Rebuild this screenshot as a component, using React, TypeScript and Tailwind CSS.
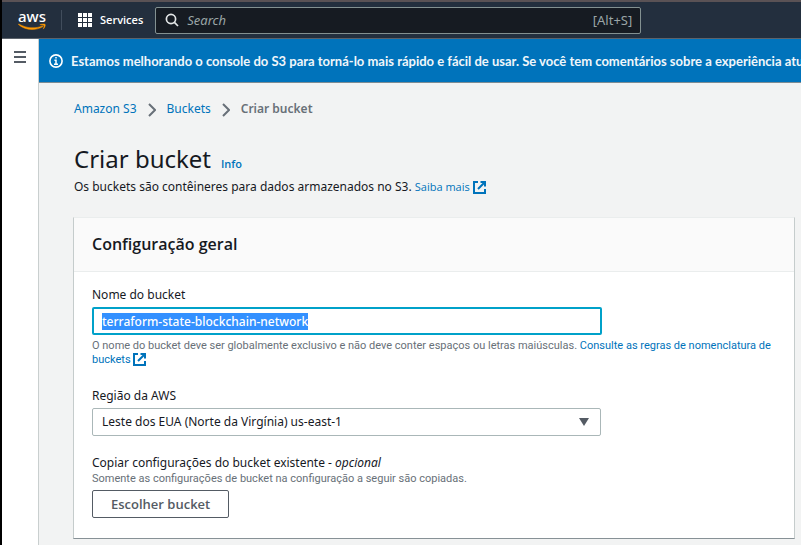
import { useEffect, useRef } from 'react';
import type { ReactNode } from 'react';

function AwsLogo() {
  return (
    <a href="#home" aria-label="AWS" className="flex w-7 flex-col items-center text-white">
      <span className="text-[15px] leading-3 font-medium">aws</span>
      <svg viewBox="0 0 28 9" className="h-[9px] w-7" fill="none" aria-hidden="true">
        <path d="M0.4 2.4C7 8.6 18 8.8 25 4.6L24.6 3.9C17.6 6.8 8.5 6.6 0.7 1.9Z" fill="#f90" stroke="#f90" strokeWidth="0.5" />
        <path d="M21.8 2.7C24 1.9 26.6 1.8 27.2 2.4C27.7 3.2 26.8 5.6 25.2 7.1C25.9 5.4 26.3 4 25.9 3.5C25.4 3.1 23.8 3.1 21.8 2.7Z" fill="#f90" stroke="#f90" strokeWidth="0.4" />
      </svg>
    </a>
  );
}

function ExternalIcon() {
  return (
    <svg viewBox="0 0 13 13" className="inline-block size-[13px] align-[-3px]" fill="none" stroke="#0073bb" strokeWidth="2" aria-hidden="true">
      <path d="M5 1H1V12H12V8" />
      <path d="M7.5 1H12V5.5M12 1L5 8" />
    </svg>
  );
}

function Chevron() {
  return (
    <svg viewBox="0 0 8 14" className="mt-[2px] h-[14px] w-2" fill="none" stroke="#687078" strokeWidth="2" aria-hidden="true">
      <path d="M1 1L7 7L1 13" />
    </svg>
  );
}

function Hint({ id, children }: { id: string; children: ReactNode }) {
  return (
    <p id={id} className="font-['Roboto',sans-serif] text-[11px] leading-[14px] text-[#687078]">
      {children}
    </p>
  );
}

function Header() {
  return (
    <header className="flex h-[39px] items-center border-t-2 border-b border-t-[#5a5255] border-b-[#5c636b] bg-[#232f3e] pl-4 text-white">
      <AwsLogo />
      <span className="mr-4 ml-[15px] h-5 w-px bg-[#414d5c]" />
      <button type="button" className="flex items-center gap-2 font-['Open_Sans',sans-serif] text-[11px] font-semibold">
        <svg viewBox="0 0 14 14" className="size-[14px]" fill="#fff" aria-hidden="true">
          <path d="M0 0h4v4H0zM5 0h4v4H5zM10 0h4v4h-4zM0 5h4v4H0zM5 5h4v4H5zM10 5h4v4h-4zM0 10h4v4H0zM5 10h4v4H5zM10 10h4v4h-4z" />
        </svg>
        Services
      </button>
      <label className="ml-3 flex h-[27px] w-[486px] items-center rounded-[2px] border border-[#839191] bg-[#161b22] px-2 text-[13px]">
        <svg viewBox="0 0 14 14" className="mr-2 ml-px size-[14px] shrink-0" fill="none" stroke="#e4e7e8" strokeWidth="1.7" aria-hidden="true">
          <circle cx="6" cy="6" r="4.6" />
          <path d="M9.4 9.4L13 13" />
        </svg>
        <input
          type="search"
          aria-label="Search"
          placeholder="Search"
          className="min-w-0 flex-1 bg-transparent outline-none placeholder:text-[#9aa5a6] placeholder:italic"
        />
        <span className="text-[#9aa5a6]">[Alt+S]</span>
      </label>
    </header>
  );
}

export default function App() {
  const nameInput = useRef<HTMLInputElement>(null);

  useEffect(() => {
    nameInput.current?.focus();
    nameInput.current?.select();
  }, []);

  return (
    <div className="flex min-h-screen flex-col overflow-hidden border-l-2 border-black bg-[#f2f3f3] font-['Noto_Sans','Open_Sans',sans-serif] text-[12px] leading-[18px] text-[#16191f]">
      <Header />
      <div className="flex flex-1">
        <nav className="flex w-[37px] shrink-0 flex-col items-center border-r border-[#c9cfcf] bg-white pt-3">
          <button type="button" aria-label="Menu" className="flex w-3 flex-col gap-[3px]">
            <span className="h-[2px] bg-[#545b64]" />
            <span className="h-[2px] bg-[#545b64]" />
            <span className="h-[2px] bg-[#545b64]" />
          </button>
        </nav>
        <div className="min-w-0 flex-1">
          <div className="flex h-11 items-center gap-2 overflow-hidden border-b border-[#7d8c93] bg-[#0073bb] pl-[10px] whitespace-nowrap text-[#f0f6fa]">
            <svg viewBox="0 0 14 14" className="size-[14px] shrink-0" fill="none" stroke="#fff" aria-hidden="true">
              <circle cx="7" cy="7" r="6.1" strokeWidth="1.6" />
              <path d="M7 3v1.6M5.4 6.3H7V10M5 10.3h4" strokeWidth="1.5" />
            </svg>
            <p className="font-['Lato',sans-serif] text-[13px] font-bold">
              Estamos melhorando o console do S3 para torná-lo mais rápido e fácil de usar. Se você tem comentários sobre a experiência atual
            </p>
          </div>
          <main className="pr-[6px] pl-[34px]">
            <nav aria-label="Breadcrumb" className="flex items-center gap-[11px] px-px pt-[17px]">
              <a href="#s3" className="text-[#0073bb]">Amazon S3</a>
              <Chevron />
              <a href="#buckets" className="text-[#0073bb]">Buckets</a>
              <Chevron />
              <span className="font-semibold text-[#687078]">Criar bucket</span>
            </nav>
            <div className="mt-[25px] mb-[3px] flex items-baseline gap-[10px] px-px">
              <h1 className="text-[24px] leading-8">Criar bucket</h1>
              <a href="#info" className="font-['Open_Sans',sans-serif] text-[11px] font-semibold text-[#0073bb]">Info</a>
            </div>
            <p className="px-px">
              Os buckets são contêineres para dados armazenados no S3.{' '}
              <a href="#more" className="font-['Open_Sans',sans-serif] text-[11px] text-[#0073bb]">
                Saiba mais <ExternalIcon />
              </a>
            </p>
            <section className="mt-[21px] border border-t-[#eaeded] border-r-[#c5cccc] border-b-[#879196] border-l-[#c5cccc] bg-white">
              <div className="border-b border-[#eaeded] bg-[#fafafa] px-[18px] pt-4 pb-[17px]">
                <h2 className="font-['Open_Sans',sans-serif] text-[16px] leading-5 font-semibold">Configuração geral</h2>
              </div>
              <div className="flex flex-col gap-[18px] px-[18px] pt-[14px] pb-5">
                <div className="pb-[2px]">
                  <label htmlFor="bucket-name" className="mb-[3px] block">Nome do bucket</label>
                  <input
                    id="bucket-name"
                    ref={nameInput}
                    defaultValue="terraform-state-blockchain-network"
                    aria-describedby="bucket-hint"
                    className="mb-1 block h-7 w-full max-w-[510px] rounded-[2px] border-2 border-[#00a1c9] px-2 font-medium outline-none selection:bg-[#3390ff] selection:text-white"
                  />
                  <Hint id="bucket-hint">
                    O nome do bucket deve ser globalmente exclusivo e não deve conter espaços ou letras maiúsculas.{' '}
                    <a href="#rules" className="text-[#0073bb]">
                      Consulte as regras de nomenclatura de buckets <ExternalIcon />
                    </a>
                  </Hint>
                </div>
                <div>
                  <label htmlFor="region" className="mb-[3px] block">Região da AWS</label>
                  <div className="grid max-w-[509px] items-center">
                    <select
                      id="region"
                      className="col-start-1 row-start-1 h-7 appearance-none rounded-[2px] border border-[#aab7b8] bg-white px-[9px]"
                    >
                      <option>Leste dos EUA (Norte da Virgínia) us-east-1</option>
                    </select>
                    <svg viewBox="0 0 10 8" className="pointer-events-none col-start-1 row-start-1 mr-3 h-2 w-[10px] justify-self-end" fill="#545b64" aria-hidden="true">
                      <path d="M0 0H10L5 8Z" />
                    </svg>
                  </div>
                </div>
                <div>
                  <p>
                    Copiar configurações do bucket existente - <i>opcional</i>
                  </p>
                  <Hint id="copy-hint">Somente as configurações de bucket na configuração a seguir são copiadas.</Hint>
                  <button
                    type="button"
                    aria-describedby="copy-hint"
                    className="mt-1 h-7 rounded-[2px] border border-[#545b64] bg-white px-[18px] font-['Open_Sans',sans-serif] text-[13px] font-semibold text-[#545b64]"
                  >
                    Escolher bucket
                  </button>
                </div>
              </div>
            </section>
          </main>
        </div>
      </div>
    </div>
  );
}
